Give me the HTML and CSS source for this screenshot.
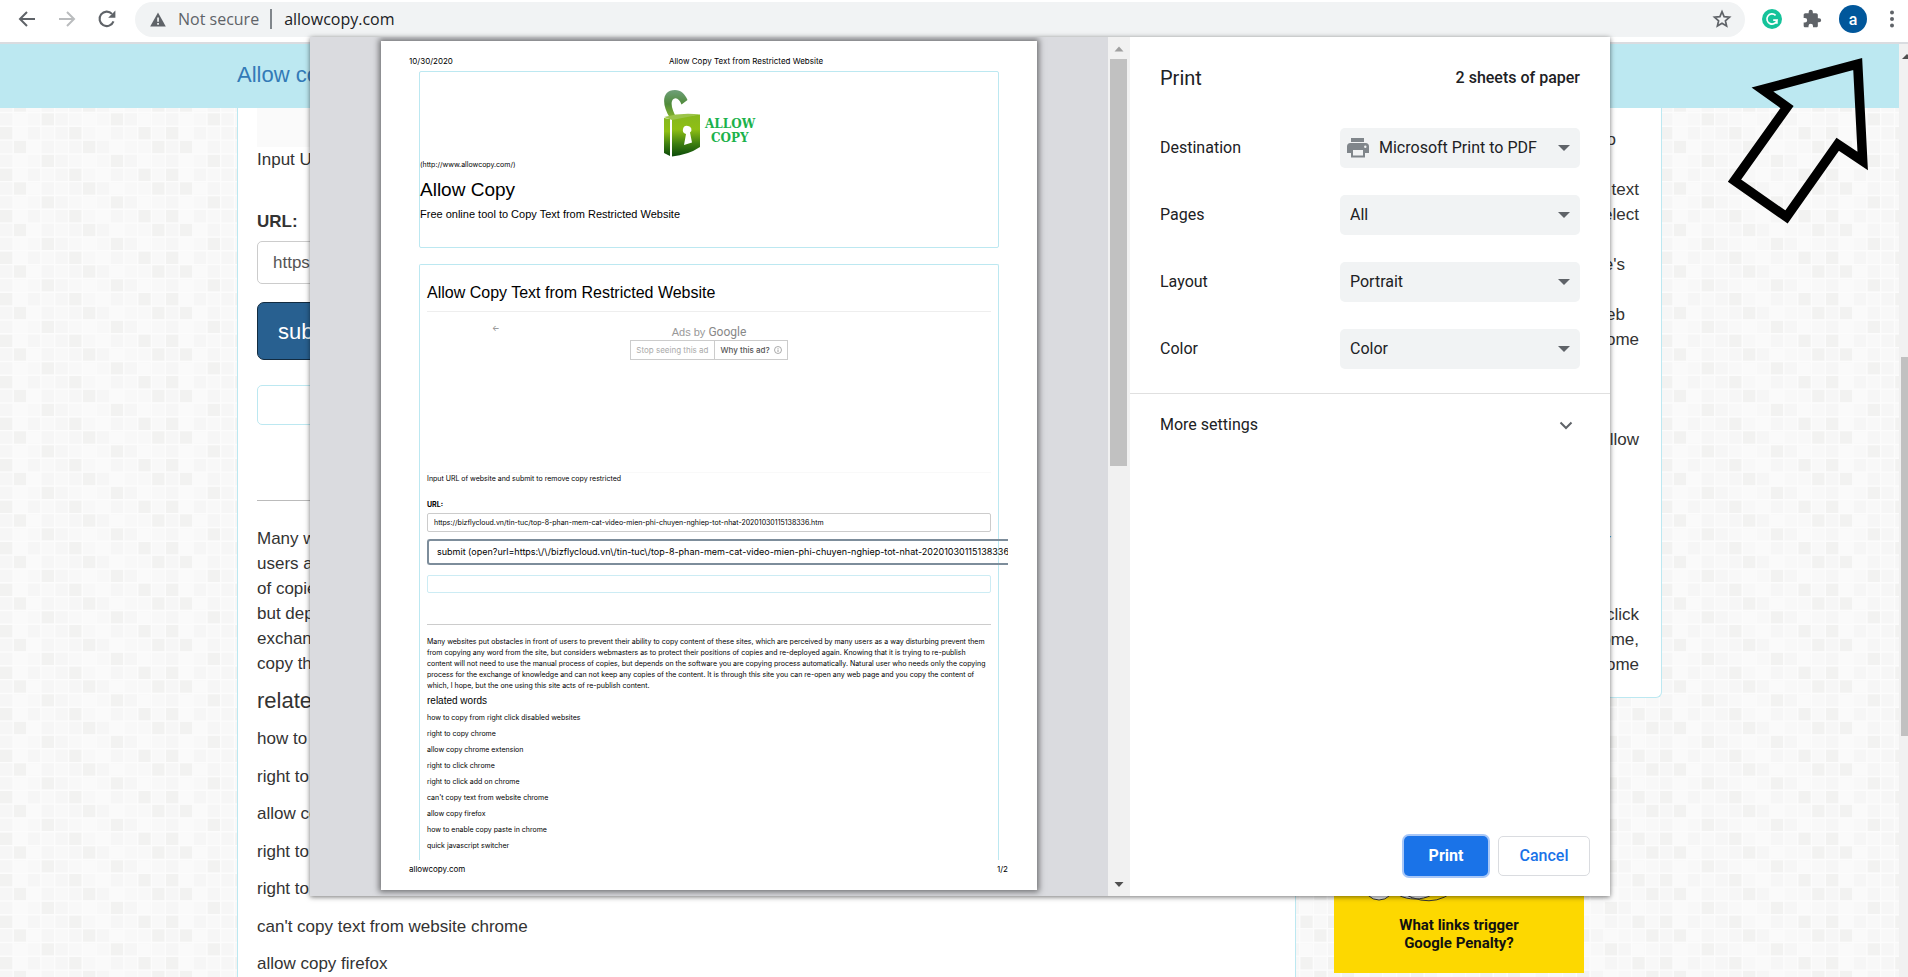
FILE: index.html
```html
<!DOCTYPE html>
<html lang="en">
<head>
<meta charset="utf-8">
<title>Allow Copy Text from Restricted Website</title>
<link rel="stylesheet" href="styles.css">
</head>
<body>
<header class="toolbar">
  <button class="tool" aria-label="Back"><svg width="20" height="20" viewBox="0 0 20 20" fill="none" stroke="#5f6368" stroke-width="2"><path d="M18 10H3M10 3l-7 7 7 7"/></svg></button>
  <button class="tool" aria-label="Forward"><svg width="20" height="20" viewBox="0 0 20 20" fill="none" stroke="#babcbe" stroke-width="2"><path d="M2 10h15M10 3l7 7-7 7"/></svg></button>
  <button class="tool" aria-label="Reload"><svg width="20" height="20" viewBox="0 0 20 20"><path d="M16.5 12.4A7.2 7.2 0 1 1 15 4.9" fill="none" stroke="#5f6368" stroke-width="2.1"/><path d="M18.4 1.6v7.2h-7.2z" fill="#5f6368"/></svg></button>
  <div class="omnibox">
    <svg width="16" height="15" viewBox="0 0 16 15"><path d="M8 .5 15.8 14.500H.2z" fill="#5f6368"/><path d="M7.200 5.500h1.700v4.200H7.200zM7.200 11h1.700v1.700H7.200z" fill="#f1f3f4"/></svg>
    <span class="insecure">Not secure</span>
    <span class="sep"></span>
    <span class="address">allowcopy.com</span>
    <button class="star" aria-label="Bookmark this page"><svg width="20" height="20" viewBox="0 0 20 20" fill="none" stroke="#5f6368" stroke-width="1.700"><path d="M10 2.700l2.100 5 5.400.5-4.100 3.600 1.200 5.300L10 14.300l-4.600 2.800 1.200-5.300-4.100-3.600 5.400-.5z"/></svg></button>
  </div>
  <div class="extensions">
    <button class="tool" aria-label="Grammarly"><svg width="20" height="20" viewBox="0 0 20 20"><circle cx="10" cy="10" r="10" fill="#15c39a"/><path d="M13.600 6.300A5.100 5.100 0 1 0 15 11.200h-3.800M14.900 11v3.800" fill="none" stroke="#fff" stroke-width="1.700"/></svg></button>
    <button class="tool" aria-label="Extensions"><svg width="20" height="20" viewBox="0 0 24 24" fill="#5f6368"><path d="M20.500 11H19V7c0-1.100-.9-2-2-2h-4V3.500a2.500 2.500 0 0 0-5 0V5H4c-1.100 0-2 .9-2 2v3.800h1.500a2.700 2.700 0 0 1 0 5.400H2V20c0 1.100.9 2 2 2h3.800v-1.500a2.700 2.700 0 0 1 5.400 0V22H17c1.100 0 2-.9 2-2v-4h1.500a2.500 2.500 0 0 0 0-5z"/></svg></button>
    <button class="avatar" aria-label="Profile">a</button>
    <button class="tool menu" aria-label="Menu"><svg width="6" height="18" viewBox="0 0 6 18" fill="#5f6368"><circle cx="3" cy="2.500" r="2"/><circle cx="3" cy="9" r="2"/><circle cx="3" cy="15.500" r="2"/></svg></button>
  </div>
</header>

<div class="viewport">
  <div class="site">
    <svg class="tiles" aria-hidden="true">
      <defs>
        <pattern id="squares" width="166" height="166" patternUnits="userSpaceOnUse" viewBox="0 0 120 120">
          <rect width="120" height="120" fill="#f8f8f8"/>
          <g id="band">
            <path fill="#f2f2f1" d="M0 0h9v9H0zM50 0h9v9h-9zM100 0h9v9h-9zM10 10h9v9h-9zM60 10h9v9h-9zM110 10h9v9h-9zM30 20h9v9h-9zM80 20h9v9h-9z"/>
            <path fill="#f6f6f6" d="M20 0h9v9h-9zM40 0h9v9h-9zM80 0h9v9h-9zM0 10h9v9H0zM30 10h9v9h-9zM50 10h9v9h-9zM70 10h9v9h-9zM90 20h9v9h-9zM40 20h9v9h-9zM0 20h9v9H0z"/>
            <path fill="#fafafa" d="M10 0h9v9h-9zM70 0h9v9h-9zM20 10h9v9h-9zM80 10h9v9h-9zM60 20h9v9h-9zM10 20h9v9h-9zM100 20h9v9h-9z"/>
          </g>
          <use href="#band" y="30"/><use href="#band" y="60"/><use href="#band" y="90"/>
          <path d="M9.500 0v120M19.500 0v120M29.500 0v120M39.500 0v120M49.500 0v120M59.500 0v120M69.500 0v120M79.500 0v120M89.500 0v120M99.500 0v120M109.500 0v120M119.500 0v120M0 9.500h120M0 19.500h120M0 29.500h120M0 39.500h120M0 49.500h120M0 59.500h120M0 69.500h120M0 79.500h120M0 89.500h120M0 99.500h120M0 109.500h120M0 119.500h120" stroke="#fcfcfc"/>
        </pattern>
      </defs>
      <rect width="100%" height="100%" fill="url(#squares)"/>
    </svg>
    <nav class="site-nav"><a href="#">Allow copy</a></nav>
    <div class="columns">
      <main class="main-card">
        <div class="ad-slot"></div>
        <p class="intro">Input URL of</p>
        <label class="url-label" for="url">URL:</label>
        <input class="url-input" id="url" type="text" value="https://">
        <button class="submit">submit</button>
        <div class="empty-box"></div>
        <hr>
        <p class="about">Many websites<br>users as a way<br>of copies and<br>but depends<br>exchange of<br>copy the</p>
        <h2>related words</h2>
        <ul class="words">
          <li>how to copy</li>
          <li>right to copy</li>
          <li>allow copy</li>
          <li>right to click</li>
          <li>right to click</li>
          <li>can't copy text from website chrome</li>
          <li>allow copy firefox</li>
        </ul>
      </main>
      <aside class="side">
        <div class="side-card">
          <p class="short">to</p>
          <p>text<br>select</p>
          <p class="mid">Chrome's</p>
          <p><span class="mid">web</span><br>Chrome</p>
          <p class="apart">allow</p>
          <p class="apart far"><a href="#">for</a></p>
          <p class="spaced">click<br>Chrome,<br>Chrome</p>
        </div>
        <a class="promo" href="#">
          <svg width="100" height="50" viewBox="0 0 100 50" aria-hidden="true"><circle cx="15" cy="33" r="15" fill="#e8eaed" stroke="#333"/><ellipse cx="51" cy="35" rx="22" ry="12" fill="#e8eaed" stroke="#333"/><path d="M30 36q38 26 64-1" fill="none" stroke="#333"/></svg>
          <span>What links trigger<br>Google Penalty?</span>
        </a>
      </aside>
    </div>
  </div>
  <div class="page-scroll"><svg class="up" width="9" height="9" viewBox="0 0 9 9"><path d="M1 7 6 2l5 5z" fill="#505050"/></svg><div class="page-thumb"></div></div>
</div>

<section class="dialog" role="dialog" aria-label="Print">
  <div class="preview">
    <article class="sheet">
      <div class="sheet-head"><span>10/30/2020</span><span>Allow Copy Text from Restricted Website</span></div>
      <div class="brand-box">
        <svg class="logo" width="94" height="70" viewBox="0 0 94 70" role="img" aria-label="Allow Copy">
          <defs>
            <linearGradient id="body" x1="0" y1="0" x2="0" y2="1"><stop offset="0" stop-color="#86b81e"/><stop offset=".35" stop-color="#8fbf14"/><stop offset=".7" stop-color="#3c7d10"/><stop offset="1" stop-color="#0b4a0a"/></linearGradient>
            <linearGradient id="hook" x1="0" y1="0" x2="0" y2="1"><stop offset="0" stop-color="#6f9f7a"/><stop offset=".5" stop-color="#4f8a3a"/><stop offset="1" stop-color="#86b52a"/></linearGradient>
          </defs>
          <path d="M8 29C-1 15 0 1 13 1c6 0 10 4 12.500 10l-6 4.500c-2-5-5-7.500-8-5.500-4 3-1 12 3 18.500z" fill="url(#hook)"/>
          <path d="M2 29l6 1v37l-6-3z" fill="url(#body)"/>
          <path d="M10 30q14-4 28-4.500V58q-12 8-28 9.500z" fill="url(#body)"/>
          <path d="M2 28q18-5 36-2.500L10 31z" fill="#9cc44a"/>
          <path d="M26 37a3.600 3.600 0 0 1 2 6.500l2 10-8 2.500 2-11a4 4 0 0 1 2-8z" fill="#fff"/>
          <text x="43" y="39" class="logo-text">ALLOW</text>
          <text x="49" y="53" class="logo-text">COPY</text>
        </svg>
        <span class="fine site-link">(http://www.allowcopy.com/)</span>
        <h1>Allow Copy</h1>
        <p class="tagline">Free online tool to Copy Text from Restricted Website</p>
      </div>
      <div class="tool-box">
        <h2>Allow Copy Text from Restricted Website</h2>
        <div class="ads">
          <span class="ads-back">←</span>
          <div class="ads-info">
            <div class="ads-by">Ads by <span>Google</span></div>
            <div class="ads-actions"><button>Stop seeing this ad</button><button class="why">Why this ad? <svg width="8" height="8" viewBox="0 0 8 8" fill="none" stroke="#888"><circle cx="4" cy="4" r="3.500" stroke-width=".7"/><path d="M4 3.500V6M4 2v.8" stroke-width=".8"/></svg></button></div>
          </div>
        </div>
        <p class="fine">Input URL of website and submit to remove copy restricted</p>
        <label class="fine fine-label" for="sheet-url">URL:</label>
        <input class="fine sheet-url" id="sheet-url" type="text" readonly value="https://bizflycloud.vn/tin-tuc/top-8-phan-mem-cat-video-mien-phi-chuyen-nghiep-tot-nhat-20201030115138336.htm">
        <div class="sheet-submit">submit (open?url=https:\/\/bizflycloud.vn\/tin-tuc\/top-8-phan-mem-cat-video-mien-phi-chuyen-nghiep-tot-nhat-20201030115138336.htm</div>
        <div class="sheet-empty"></div>
        <p class="fine sheet-about">Many websites put obstacles in front of users to prevent their ability to copy content of these sites, which are perceived by many users as a way disturbing prevent them<br>from copying any word from the site, but considers webmasters as to protect their positions of copies and re-deployed again. Knowing that it is trying to re-publish<br>content will not need to use the manual process of copies, but depends on the software you are copying process automatically. Natural user who needs only the copying<br>process for the exchange of knowledge and can not keep any copies of the content. It is through this site you can re-open any web page and you copy the content of<br>which, I hope, but the one using this site acts of re-publish content.</p>
        <h3>related words</h3>
        <ul class="fine sheet-words">
          <li>how to copy from right click disabled websites</li>
          <li>right to copy chrome</li>
          <li>allow copy chrome extension</li>
          <li>right to click chrome</li>
          <li>right to click add on chrome</li>
          <li>can't copy text from website chrome</li>
          <li>allow copy firefox</li>
          <li>how to enable copy paste in chrome</li>
          <li>quick javascript switcher</li>
        </ul>
      </div>
      <div class="sheet-foot"><span>allowcopy.com</span><span>1/2</span></div>
    </article>
  </div>
  <div class="preview-scroll">
    <svg width="18" height="22" viewBox="0 0 18 22"><path d="M4.500 14.500 9 9.500l4.500 5z" fill="#a0a0a0"/></svg>
    <div class="preview-thumb"></div>
    <svg class="down" width="18" height="22" viewBox="0 0 18 22"><path d="M4.500 8 9 13l4.500-5z" fill="#505050"/></svg>
  </div>
  <form class="settings">
    <div class="settings-head"><h2>Print</h2><span>2 sheets of paper</span></div>
    <div class="rows">
      <label for="dest">Destination</label>
      <div class="pick has-icon">
        <svg class="printer" width="22" height="20" viewBox="0 0 22 20"><path d="M4 0h13v4H4zM3.500 5h15A3.500 3.500 0 0 1 22 8.500V15h-4v4.500H4V15H0V8.500A3.500 3.500 0 0 1 3.500 5z" fill="#80868b"/><path d="M6 12h10v5.500H6z" fill="#f1f3f4"/><circle cx="18.300" cy="8.700" r="1.200" fill="#f1f3f4"/></svg>
        <select id="dest"><option>Microsoft Print to PDF</option></select>
        <svg class="caret" width="12" height="6" viewBox="0 0 12 6"><path d="M0 0h12L6 6z" fill="#5f6368"/></svg>
      </div>
      <label for="pages">Pages</label>
      <div class="pick"><select id="pages"><option>All</option></select><svg class="caret" width="12" height="6" viewBox="0 0 12 6"><path d="M0 0h12L6 6z" fill="#5f6368"/></svg></div>
      <label for="layout">Layout</label>
      <div class="pick"><select id="layout"><option>Portrait</option></select><svg class="caret" width="12" height="6" viewBox="0 0 12 6"><path d="M0 0h12L6 6z" fill="#5f6368"/></svg></div>
      <label for="color">Color</label>
      <div class="pick"><select id="color"><option>Color</option></select><svg class="caret" width="12" height="6" viewBox="0 0 12 6"><path d="M0 0h12L6 6z" fill="#5f6368"/></svg></div>
    </div>
    <button class="more" type="button">More settings <svg width="14" height="9" viewBox="0 0 14 9" fill="none" stroke="#5f6368" stroke-width="2"><path d="M1.500 1.500 7 7l5.500-5.500"/></svg></button>
    <div class="actions"><button class="primary" type="button">Print</button><button class="secondary" type="button">Cancel</button></div>
  </form>
</section>

<svg class="pointer" width="150" height="180" viewBox="0 0 150 180" aria-hidden="true"><path d="M127.700 25 32.500 50.500 57 68 4.500 141.700 56.500 178 107.700 105.300 132.700 122z" transform="translate(3 -10)" fill="none" stroke="#000" stroke-width="9.500"/></svg>
</body>
</html>
```
FILE: styles.css
```css
* { box-sizing: border-box; }
body {
  margin: 0;
  height: 100vh;
  display: flex;
  flex-direction: column;
  position: relative;
  overflow: hidden;
  font-family: "Liberation Sans", Arial, sans-serif;
  color: #333;
  background: #fff;
}
h1, h2, h3, p, ul { margin: 0; padding: 0; font-weight: 400; }
ul { list-style: none; }
button, select, input { font: inherit; color: inherit; margin: 0; }
button { border: 0; background: none; padding: 0; }
a { color: #337ab7; text-decoration: none; }
svg { display: block; flex: none; }

/* Browser toolbar */
.toolbar {
  display: flex;
  align-items: center;
  gap: 20px;
  height: 44px;
  padding: 0 13px 4px 17px;
  border-bottom: 2px solid #dadce0;
  font-family: "Open Sans", "Noto Sans", sans-serif;
}
.omnibox {
  flex: 1;
  display: flex;
  align-items: center;
  height: 35px;
  margin-right: 17px;
  margin-left: -2px;
  padding: 0 13px 0 15px;
  border-radius: 18px;
  background: #f1f3f4;
  font-size: 16px;
}
.insecure { margin-left: 12px; color: #5f6368; }
.sep { width: 2px; height: 20px; margin: 0 12px 0 11px; background: #80868b; }
.address { color: #202124; }
.star { margin-left: auto; }
.extensions { display: flex; align-items: center; gap: 20px; margin-left: -20px; }
.extensions .avatar { margin-left: -3px; }
.avatar {
  width: 28px;
  height: 28px;
  border-radius: 50%;
  background: #01579b;
  color: #fff;
  font: 500 16px Roboto, sans-serif;
}
.extensions .menu { margin-left: 2px; }

/* Site behind the dialog */
.viewport { flex: 1; min-height: 0; display: flex; }
.site { flex: 1; min-width: 0; position: relative; overflow: hidden; }
.tiles { position: absolute; inset: 0; width: 100%; height: 100%; }
.site-nav {
  position: relative;
  height: 64px;
  padding: 0 237px;
  background: #bce8f1;
  font-size: 22px;
  line-height: 62px;
}
.columns {
  position: relative;
  display: flex;
  justify-content: space-between;
  margin: 0 237px;
  font-size: 17px;
  line-height: 25px;
}
.main-card {
  width: 1059px;
  padding: 0 19px 30px;
  border: 1px solid #bce8f1;
  border-top: 0;
  background: #fff;
}
.ad-slot { height: 39px; background: #fafafa; }
.url-label { display: block; margin: 37px 0 7px; font-weight: 700; }
.url-input {
  display: block;
  width: 100%;
  height: 43px;
  padding: 0 15px;
  border: 1px solid #ccc;
  border-radius: 5px;
  color: #555;
}
.submit {
  display: block;
  height: 58px;
  margin-top: 18px;
  padding: 0 20px;
  border: 1px solid #122b40;
  border-radius: 7px;
  background: #286090;
  color: #fff;
  font-size: 22px;
}
.empty-box { height: 40px; margin-top: 25px; border: 1px solid #bce8f1; border-radius: 5px; }
.main-card hr { margin: 75px 0 25px; border: 0; border-top: 1px solid #bbb; }
.main-card h2 { margin: 10px 0; font-size: 22px; line-height: 30px; }
.words { display: flex; flex-direction: column; justify-content: space-between; height: 250px; }
.side { width: 342px; }
.side-card {
  height: 590px;
  padding: 19px 22px 0;
  border: 1px solid #bce8f1;
  border-top: 0;
  border-radius: 0 0 6px 6px;
  background: #fff;
  text-align: right;
}
.side-card p { margin-bottom: 25px; }
.side-card .short { padding-right: 23px; }
.side-card .mid { padding-right: 14px; }
.side-card .far { padding-right: 28px; }
.side-card .apart { margin-top: 75px; }
.side-card .spaced { margin-top: 50px; }
.promo {
  display: flex;
  flex-direction: column;
  justify-content: flex-end;
  align-items: center;
  width: 250px;
  height: 250px;
  margin: 25px 0 0 14px;
  padding-bottom: 21px;
  background: #fdd800;
  color: #111;
  font: 700 15px/18px Roboto, sans-serif;
  text-align: center;
}
.promo svg { align-self: flex-start; margin: 0 0 14px 30px; }
.page-scroll { width: 9px; padding-left: 2px; background: #f1f1f1; }
.page-scroll .up { margin-top: 8px; }
.page-thumb { height: 379px; margin-top: 296px; background: #c1c1c1; }

/* Print dialog */
.dialog {
  position: absolute;
  inset: 37px 298px 81px 310px;
  display: flex;
  background: #fff;
  box-shadow: 0 1px 5px rgba(0, 0, 0, .55);
}
.preview { flex: 1; min-width: 0; padding: 4px 71px 6px; background: #dadbdf; overflow: hidden; }
.sheet {
  height: 100%;
  display: flex;
  flex-direction: column;
  padding: 15px 29px 0 28px;
  background: #fff;
  box-shadow: 0 0 6px 2px rgba(0, 0, 0, .5);
  color: #000;
}
.sheet-head { display: flex; gap: 216px; font: 8px/11px Inter, sans-serif; margin-bottom: 4px; }
.fine { font: 7px/11px Inter, sans-serif; }
.site-link { display: block; }
.brand-box {
  height: 177px;
  margin: 0 9px 0 10px;
  padding-top: 17px;
  border: 1px solid #bce8f1;
  border-radius: 2px;
}
.logo { margin: 0 0 0 242px; }
.logo-text { font: 700 12px "DejaVu Serif", serif; fill: #1bb24b; }
.brand-box h1 { margin-top: 8px; font-size: 19px; line-height: 24px; }
.tagline { margin-top: 5px; font-size: 11px; line-height: 15px; }
.tool-box {
  flex: 1;
  min-height: 0;
  margin: 16px 9px 0 10px;
  padding: 17px 7px 0;
  border: 1px solid #bce8f1;
  border-bottom: 0;
  border-radius: 2px 2px 0 0;
}
.tool-box h2 { padding-bottom: 7px; border-bottom: 1px solid #eee; font-size: 16px; line-height: 22px; }
.ads { position: relative; height: 161px; border-bottom: 1px solid #f9f9f9; padding-top: 13px; }
.ads-back { position: absolute; left: 65px; top: 11px; font: 8px/11px Inter, sans-serif; color: #888; }
.ads-info { display: flex; flex-direction: column; align-items: center; }
.ads-by { font-size: 11px; line-height: 14px; color: #999; }
.ads-by span { font: 12px/14px Roboto, sans-serif; color: #888; }
.ads-actions { display: flex; height: 20px; margin-top: 1px; border: 1px solid #ccc; font: 8px/11px Inter, sans-serif; color: #aaa; }
.ads-actions button { padding: 0 6px 0 5px; }
.ads-actions .why { display: flex; align-items: center; gap: 4px; padding: 0 5px; border-left: 1px solid #ccc; color: #555; font-weight: 500; }
.fine-label { display: block; margin: 15px 0 3px; font-weight: 700; }
.sheet-url { display: block; width: 100%; height: 19px; padding: 0 6px; border: 1px solid #ccc; border-radius: 2px; }
.sheet-submit {
  height: 26px;
  margin: 7px -17px 10px 0;
  padding-left: 8px;
  border: 2px solid #7d8d9b;
  border-right: 0;
  border-radius: 3px 0 0 3px;
  font: 9px/22px Inter, sans-serif;
  white-space: nowrap;
  overflow: hidden;
}
.sheet-empty { height: 18px; border: 1px solid #ccecf4; border-radius: 2px; }
.sheet-about { margin-top: 31px; padding-top: 11px; border-top: 1px solid #ccc; white-space: nowrap; }
.tool-box h3 { margin-top: 4px; font-size: 10px; line-height: 12px; }
.sheet-words { display: grid; gap: 5px; margin-top: 5px; }
.sheet-foot { display: flex; justify-content: space-between; height: 30px; padding-top: 4px; font: 8px/11px Inter, sans-serif; }

.preview-scroll { display: flex; flex-direction: column; width: 22px; padding: 0 3px 0 2px; background: #f1f1f1; }
.preview-thumb { height: 407px; background: #c1c1c1; }
.preview-scroll .down { margin-top: auto; }

.settings {
  width: 480px;
  display: flex;
  flex-direction: column;
  padding-bottom: 20px;
  font: 16px/20px Roboto, sans-serif;
  color: #202124;
}
.settings-head { display: flex; justify-content: space-between; align-items: center; padding: 29px 30px 0; }
.settings-head h2 { font-size: 20px; line-height: 24px; }
.settings-head span { font-weight: 500; }
.rows {
  display: grid;
  grid-template-columns: 1fr 240px;
  align-items: center;
  row-gap: 27px;
  padding: 38px 30px 24px;
  border-bottom: 1px solid #e0e0e0;
}
.pick { position: relative; display: flex; align-items: center; height: 40px; border-radius: 5px; background: #f1f3f4; }
.pick select { width: 100%; height: 40px; padding: 0 30px 0 10px; border: 0; background: none; appearance: none; }
.has-icon .printer { margin-left: 7px; }
.caret { position: absolute; right: 10px; top: 17px; pointer-events: none; }
.more { display: flex; justify-content: space-between; align-items: center; padding: 21px 37px 0 30px; }
.actions { display: flex; justify-content: flex-end; gap: 10px; margin-top: auto; padding-right: 20px; font-weight: 500; }
.actions button { height: 40px; border-radius: 5px; }
.primary { width: 84px; background: #1a73e8; color: #fff; font-weight: 700; box-shadow: 0 0 0 2px #a8c7f7; }
.actions .secondary { width: 92px; border: 1px solid #dadce0; color: #1a73e8; }

.pointer { position: absolute; left: 1727px; top: 49px; }
```
